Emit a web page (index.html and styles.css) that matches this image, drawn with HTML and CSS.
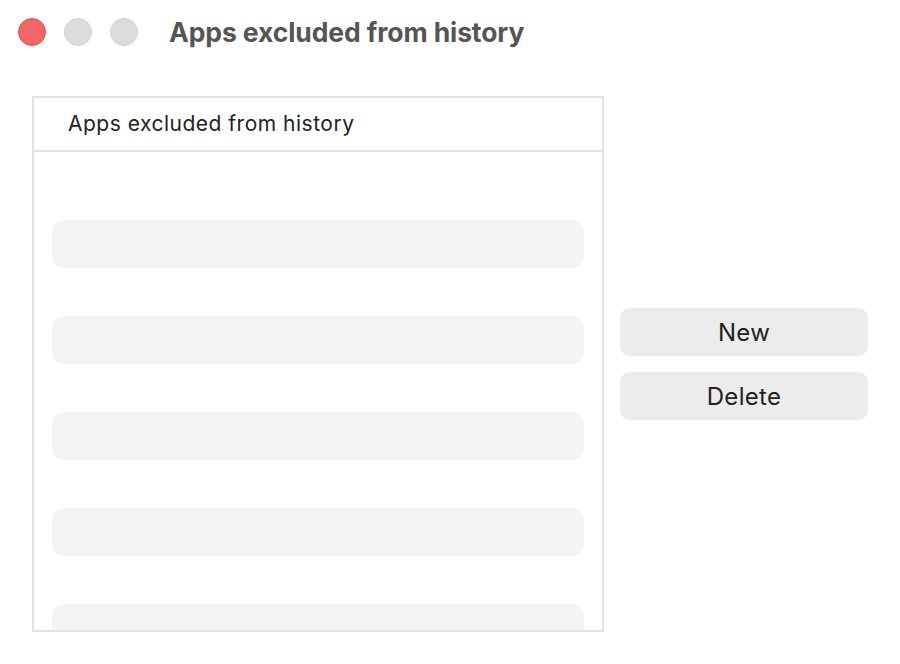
FILE: index.html
```html
<!DOCTYPE html>
<html lang="en">
<head>
    <meta charset="UTF-8">
    <meta name="viewport" content="width=device-width, initial-scale=1.0">
    <title>Apps excluded from history</title>
    <link rel="stylesheet" href="styles.css">
</head>
<body>
    <div class="titlebar">
        <div class="lights">
            <span class="light close"></span>
            <span class="light"></span>
            <span class="light"></span>
        </div>
        <h1 class="title">Apps excluded from history</h1>
    </div>

    <div class="content">
        <div class="table">
            <div class="table-header">Apps excluded from history</div>
            <div class="table-body">
                <div class="row"></div>
                <div class="row"></div>
                <div class="row"></div>
                <div class="row"></div>
                <div class="row"></div>
            </div>
        </div>
        <div class="actions">
            <button class="btn">New</button>
            <button class="btn">Delete</button>
        </div>
    </div>
</body>
</html>
```

FILE: styles.css
```css
body {
    margin: 0;
    padding: 0;
    background: #ffffff;
    font-family: Inter, "Liberation Sans", Arial, sans-serif;
    color: #222222;
}

.titlebar {
    display: flex;
    align-items: center;
    height: 64px;
    padding-left: 18px;
}
.lights {
    display: flex;
    gap: 18px;
}
.light {
    width: 26px;
    height: 26px;
    border-radius: 50%;
    background: #dcdcdc;
    border: 1px solid #d2d2d2;
}
.light.close {
    background: #ef6767;
    border-color: #e14848;
}
.title {
    margin: 0 0 0 31px;
    font-size: 26.5px;
    font-weight: 700;
    color: #555555;
    letter-spacing: -0.1px;
}

.content {
    display: flex;
    align-items: center;
    gap: 16px;
    padding: 32px 0 0 32px;
}
.table {
    width: 568px;
    height: 532px;
    border: 2px solid #e2e2e2;
    overflow: hidden;
}
.table-header {
    height: 52px;
    line-height: 52px;
    padding-left: 34px;
    font-size: 21px;
    letter-spacing: 0.5px;
    border-bottom: 2px solid #e2e2e2;
    color: #222222;
}
.table-body {
    display: flex;
    flex-direction: column;
    gap: 48px;
    padding: 68px 18px 0 18px;
}
.row {
    flex-shrink: 0;
    height: 48px;
    border-radius: 12px;
    background: #f3f4f3;
}

.actions {
    display: flex;
    flex-direction: column;
    gap: 16px;
}
.btn {
    width: 248px;
    height: 48px;
    border: none;
    border-radius: 10px;
    background: #ececec;
    color: #222222;
    font-family: Inter, "Liberation Sans", Arial, sans-serif;
    font-size: 24px;
    letter-spacing: 0.3px;
    cursor: pointer;
}
```
